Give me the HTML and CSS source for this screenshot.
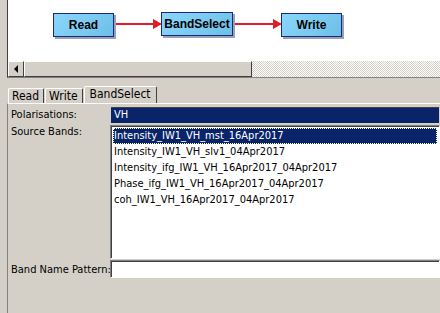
FILE: index.html
```html
<!DOCTYPE HTML>
<html>
	<head>
		<title>BandSelect</title>
		<meta charset="utf-8">
		<link rel="stylesheet" href="styles.css">
	</head>
	<body>
		<div class="top">
			<div class="canvas">
				<svg class="links" width="432" height="61">
					<line x1="105" y1="24" x2="148" y2="24" stroke="#e01c24" stroke-width="2"/>
					<polygon points="145,19 154,24 145,29" fill="#e01c24"/>
					<line x1="225" y1="24" x2="268" y2="24" stroke="#e01c24" stroke-width="2"/>
					<polygon points="265,19 274,24 265,29" fill="#e01c24"/>
				</svg>
				<div class="node" style="left:45px; top:13px; width:59px;">Read</div>
				<div class="node" style="left:153px; top:12px; width:70px;">BandSelect</div>
				<div class="node" style="left:273px; top:13px; width:59px;">Write</div>
			</div>
			<div class="hscroll">
				<div class="arrow"><span class="tri"></span></div>
				<div class="thumb"></div>
				<div class="track"></div>
			</div>
		</div>

		<ul class="tabs">
			<li>Read</li>
			<li>Write</li>
			<li class="on">BandSelect</li>
		</ul>

		<div class="panel">
			<div class="lbl">Polarisations:</div>
			<div class="field sel">VH</div>
			<div class="lbl">Source Bands:</div>
			<ul class="list">
				<li class="cur">Intensity_IW1_VH_mst_16Apr2017</li>
				<li>Intensity_IW1_VH_slv1_04Apr2017</li>
				<li>Intensity_ifg_IW1_VH_16Apr2017_04Apr2017</li>
				<li>Phase_ifg_IW1_VH_16Apr2017_04Apr2017</li>
				<li>coh_IW1_VH_16Apr2017_04Apr2017</li>
			</ul>
			<div class="lbl lbl-mid">Band Name Pattern:</div>
			<div class="field"></div>
		</div>
	</body>
</html>
```

FILE: styles.css
```css
*{ margin:0; padding:0; }
body{ background:#d4d0c8; font:11px "DejaVu Sans Condensed", "DejaVu Sans", sans-serif; font-stretch:condensed; color:#000; width:440px; height:313px; overflow:hidden; }

.top{ margin-left:7px; border-left:1px solid #404040; border-bottom:1px solid #808080; }
.canvas{ position:relative; height:61px; background:#fff; }
.links{ position:absolute; left:0; top:0; }
.node{ position:absolute; height:22px; font:bold 12px "Liberation Sans", Arial, sans-serif; line-height:23px; font-stretch:normal; text-align:center; background:linear-gradient(135deg,#8ad6fb,#6dbfe8); border:1px solid #1a2878; box-shadow:2px 2px 0 #9aa0b8; }

.hscroll{ display:flex; height:16px; }
.arrow{ width:16px; box-sizing:border-box; border:1px solid; border-color:#fff #404040 #404040 #fff; background:#d4d0c8; display:flex; align-items:center; justify-content:center; }
.tri{ width:0; height:0; border-top:4px solid transparent; border-bottom:4px solid transparent; border-right:4px solid #000; margin-left:-1px; }
.thumb{ width:228px; box-sizing:border-box; border:1px solid; border-color:#fff #404040 #404040 #fff; background:#d4d0c8; }
.track{ flex:1; background-color:#e9e7e3; background-image:repeating-conic-gradient(#d4d0c8 0 25%, #fff 0 50%); background-size:2px 2px; }

.tabs{ list-style:none; display:flex; align-items:flex-end; margin:9px 0 0 8px; height:16px; font-size:12px; }
.tabs li{ height:14px; line-height:15px; padding:0 4px 0 3px; border:1px solid; border-bottom:none; border-color:#fff #404040 transparent #fff; border-radius:2px 2px 0 0; margin-right:1px; }
.tabs li.on{ height:16px; line-height:15px; padding:0 5px 0 5px; }

.panel{ display:grid; grid-template-columns:102px 1fr; grid-template-rows:19px 136px 21px; align-items:start; margin-left:7px; border-left:1px solid #808080; border-top:1px solid #fff; padding-top:1px; height:209px; }
.lbl{ padding-left:3px; line-height:16px; white-space:nowrap; }
.lbl:first-child{ padding-top:2px; }
.lbl-mid{ padding-top:2px; }
.field{ height:18px; box-sizing:border-box; border:1px solid; border-color:#808080 #fff #fff #808080; box-shadow:inset 1px 1px 0 #404040; background:#fff; padding-left:3px; line-height:15px; }
.field.sel{ margin-top:1px; background:#0a246a; color:#fff; border-color:#d4d0c8; box-shadow:inset 0 1px 0 #404040; }
.list{ list-style:none; height:134px; box-sizing:border-box; margin-top:1px; border:1px solid; border-color:#808080 #fff #fff #808080; box-shadow:inset 1px 1px 0 #404040; background:#fff; padding:2px 2px; }
.list li{ height:16px; line-height:16px; padding-left:1px; white-space:nowrap; }
.list li.cur{ background:#0a246a; color:#fff; outline:1px dotted #fff; outline-offset:-1px; }
```
